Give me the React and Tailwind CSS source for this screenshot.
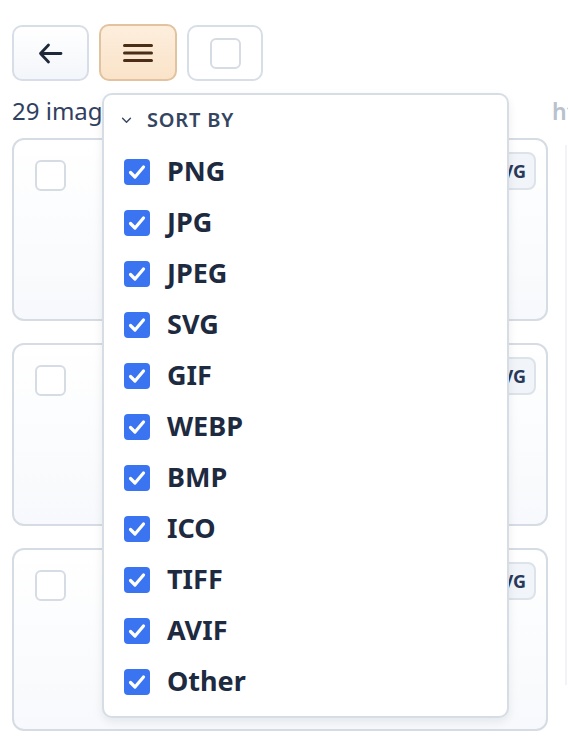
const formats = ['PNG', 'JPG', 'JPEG', 'SVG', 'GIF', 'WEBP', 'BMP', 'ICO', 'TIFF', 'AVIF', 'Other'];

function CheckIcon() {
  return (
    <svg viewBox="0 0 26 26" className="w-[26px] h-[26px] shrink-0">
      <rect x="0" y="0" width="26" height="26" rx="4" fill="#3b74f1" />
      <path d="M6.5 13.5 L11 18 L19.5 8" fill="none" stroke="white" strokeWidth="3.2" strokeLinecap="round" strokeLinejoin="round" />
    </svg>
  );
}

function ImageCard() {
  return (
    <div className="h-[183px] rounded-xl border-2 border-[#d6dce4] bg-gradient-to-b from-white to-[#f7f9fc] flex items-start justify-between pl-[21px] pr-[10px] pt-[20px] pb-4">
      <div className="w-[31px] h-[31px] rounded-md border-2 border-[#d6dce4] bg-white" />
      <div className="-mt-[8px] h-[38px] px-[8px] flex items-center rounded-lg border-2 border-[#dde3ea] bg-[#f1f4f8] text-[18px] font-bold text-[#28395a]">
        SVG
      </div>
    </div>
  );
}

export default function App() {
  return (
    <div className="relative w-[568px] h-[742px] overflow-hidden bg-white" style={{ fontFamily: '"Noto Sans", "Open Sans", sans-serif' }}>

      {/* Toolbar */}
      <div className="flex gap-[10px] pl-3 pt-[25px]">
        <button className="w-[77px] h-[56px] rounded-[10px] border-2 border-[#d8dee7] bg-gradient-to-b from-white to-[#f3f6fa] flex items-center justify-center">
          <svg viewBox="0 0 25 21" className="w-[25px] h-[21px]">
            <path d="M23 10.5 H2.5 M10.5 2 L2.5 10.5 L10.5 19" fill="none" stroke="#1e293b" strokeWidth="2.8" strokeLinecap="round" strokeLinejoin="round" />
          </svg>
        </button>
        <button className="w-[78px] h-[57px] -mt-px rounded-[10px] border-2 border-[#e2c39f] bg-gradient-to-b from-[#fdeedd] to-[#fae3c9] flex items-center justify-center">
          <svg viewBox="0 0 30 20" className="w-[30px] h-[20px]">
            <path d="M1.5 2.5 H28.5 M1.5 10 H28.5 M1.5 17.5 H28.5" stroke="#4b2e16" strokeWidth="3" strokeLinecap="round" />
          </svg>
        </button>
        <button className="w-[76px] h-[56px] rounded-[10px] border-2 border-[#d8dee7] bg-white flex items-center justify-center">
          <div className="w-[31px] h-[31px] rounded-md border-2 border-[#d6dce4]" />
        </button>
      </div>

      {/* Content columns */}
      <div className="flex gap-[4px] pl-3 mt-[14px]">
        <div className="w-[536px] shrink-0">
          <div className="h-[32px] flex items-center text-[24px] text-[#2f4161] whitespace-nowrap">29 images</div>
          <div className="mt-[11px] flex flex-col gap-[22px]">
            <ImageCard />
            <ImageCard />
            <ImageCard />
          </div>
        </div>
        <div className="w-[300px] shrink-0">
          <div className="h-[32px] flex items-center text-[23px] font-semibold text-[#b9c1cd] whitespace-nowrap">https://example.com</div>
          <div className="mt-[18px] ml-[13px] h-[540px] border-l-2 border-[#f1f3f6]" />
        </div>
      </div>

      {/* Sort dropdown */}
      <div className="absolute left-[102px] top-[93px] w-[407px] h-[625px] rounded-[10px] border-2 border-[#d7dde5] bg-white shadow-[0_4px_10px_rgba(15,23,42,0.08)] pt-[13px] pl-[20px]">
        <div className="h-[24px] flex items-center gap-[15px]">
          <svg viewBox="0 0 12 8" className="w-[11px] h-[7px] ml-[-3px]">
            <path d="M1.5 1.5 L6 6 L10.5 1.5" fill="none" stroke="#344562" strokeWidth="1.6" strokeLinecap="round" strokeLinejoin="round" />
          </svg>
          <span className="text-[20px] font-semibold tracking-[0.04em] uppercase text-[#344562]">Sort by</span>
        </div>
        <div className="mt-[14px] flex flex-col">
          {formats.map((f) => (
            <label key={f} className="h-[51px] flex items-center gap-[17px]">
              <CheckIcon />
              <span className="text-[27px] font-bold text-[#1e2a40]">{f}</span>
            </label>
          ))}
        </div>
      </div>
    </div>
  );
}
